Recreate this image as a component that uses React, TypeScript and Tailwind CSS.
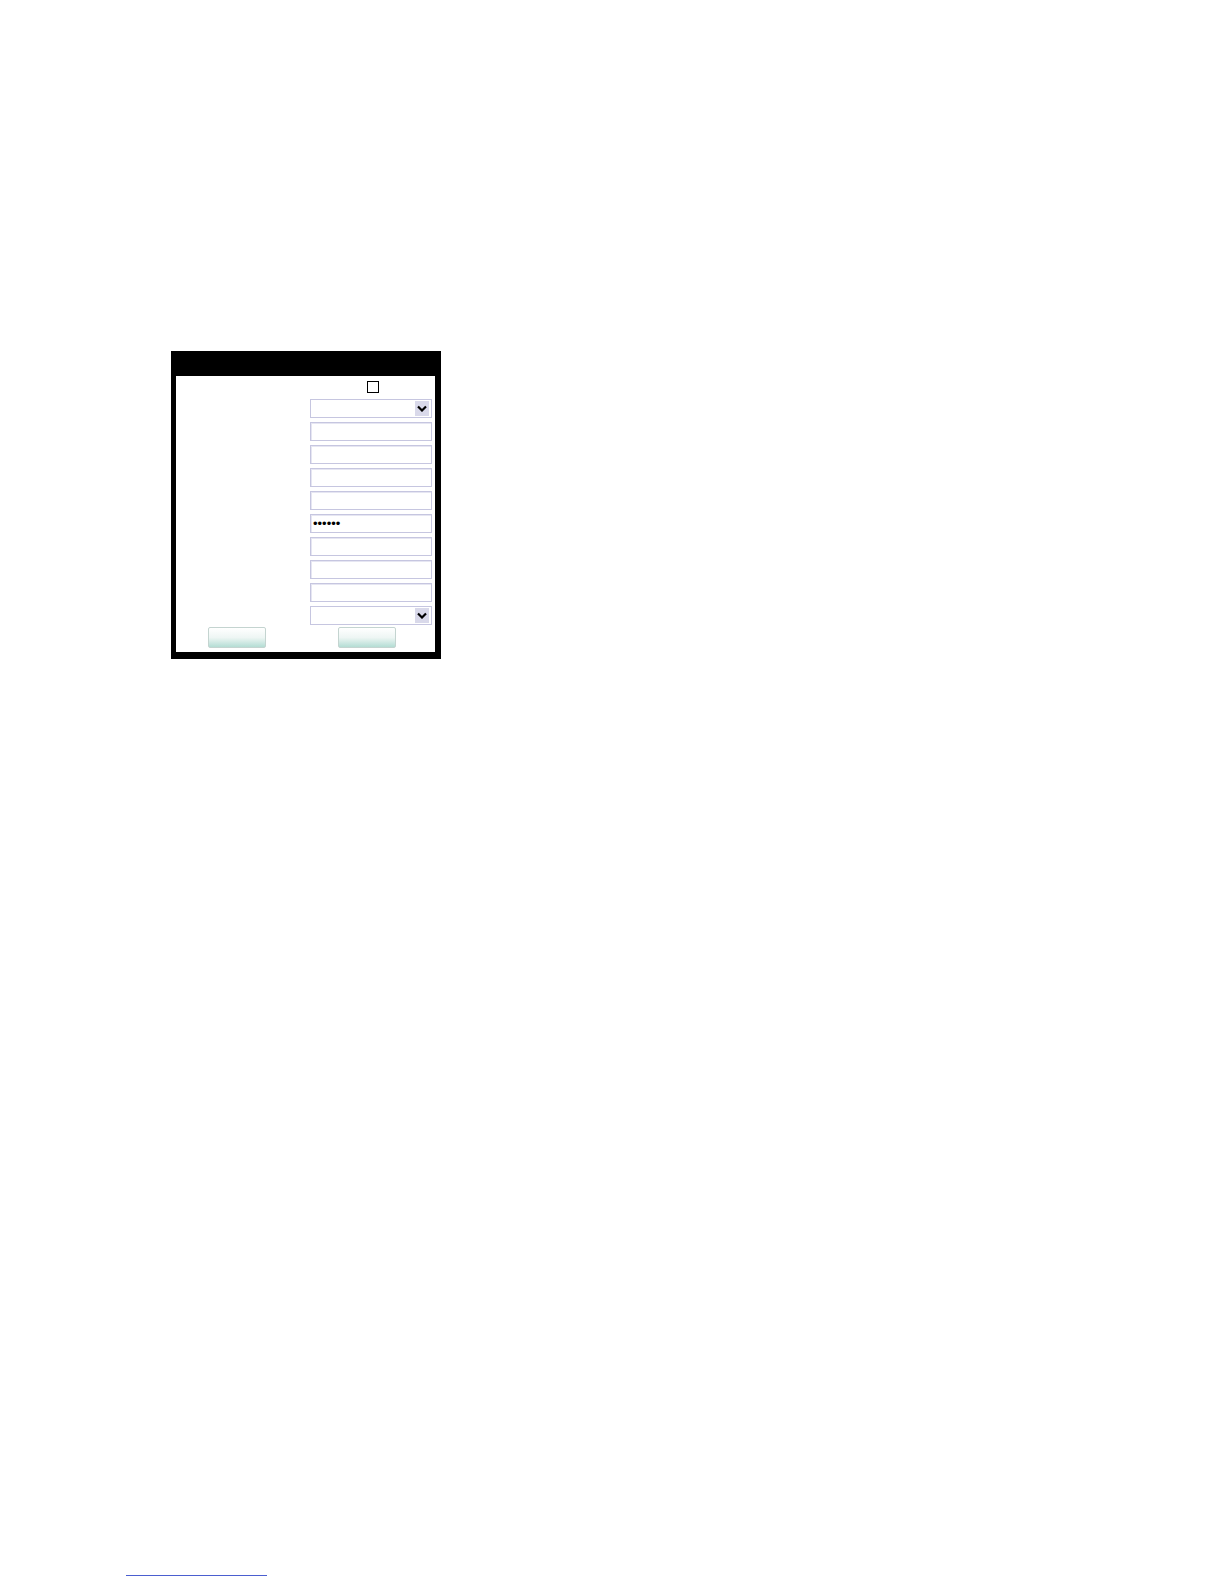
const rows = ['select', 'text', 'text', 'text', 'text', 'password', 'text', 'text', 'text', 'select'];

function FakeSelect() {
  return (
    <div className="flex h-[19px] w-[122px] items-center justify-end border border-[#c6c6e0] bg-white pr-[2px]">
      <div className="flex h-[15px] w-[14px] items-center justify-center bg-[#d9d9ea]">
        <svg width="10" height="7" viewBox="0 0 10 7">
          <path d="M1 1.5 L5 5.5 L9 1.5" fill="none" stroke="#000" strokeWidth="2.2" />
        </svg>
      </div>
    </div>
  );
}

function Field({ kind }: { kind: string }) {
  if (kind === 'select') return <FakeSelect />;
  return (
    <input
      type={kind}
      readOnly
      defaultValue={kind === 'password' ? '123456' : ''}
      className="block h-[19px] w-[122px] border border-[#c6c6e0] bg-white px-[2px] text-[13px] text-black outline-none shadow-[inset_1px_1px_0_#e6e6f2]"
      style={{ fontFamily: '"Liberation Sans", Arial, sans-serif' }}
    />
  );
}

export default function App() {
  return (
    <div className="min-h-[1584px] w-[1224px] bg-white" style={{ fontFamily: '"Liberation Sans", Arial, sans-serif' }}>
      <div className="pl-[171px] pt-[351px]">
        <div className="w-[270px] bg-black pb-[7px] pl-[5px] pr-[6px]">
          {/* header bar */}
          <div className="h-[25px]" />
          <div className="bg-white pb-[4px] pt-[5px]">
            <div className="grid grid-cols-[134px_122px] gap-y-[4px]">
              <div />
              <div className="flex justify-center pb-[2px] pl-[4px]">
                <div className="h-[12px] w-[12px] border border-black bg-white" />
              </div>
              {rows.map((k, i) => (
                <div key={i} className="contents">
                  <div />
                  <Field kind={k} />
                </div>
              ))}
            </div>
            <div className="mt-[2px] flex gap-[72px] pl-[32px]">
              <button className="h-[21px] w-[58px] rounded-[2px] border border-[#c4d4d0] bg-gradient-to-b from-white via-[#eef6f4] to-[#b4ddd4]" />
              <button className="h-[21px] w-[58px] rounded-[2px] border border-[#c4d4d0] bg-gradient-to-b from-white via-[#eef6f4] to-[#b4ddd4]" />
            </div>
          </div>
        </div>
      </div>
      <div className="pl-[126px] pt-[916px]">
        <div className="h-px w-[141px] bg-[#4b5fd0]" />
      </div>
    </div>
  );
}
